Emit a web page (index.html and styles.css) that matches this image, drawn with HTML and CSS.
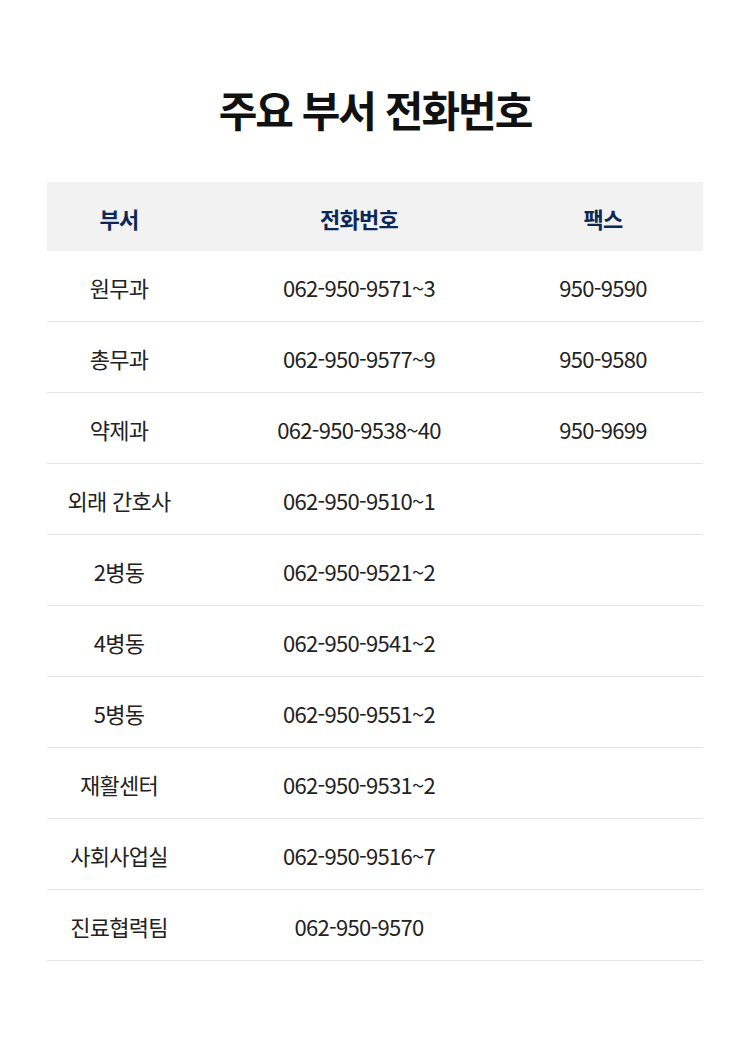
FILE: index.html
```html
<!DOCTYPE html>
<html lang="ko">
<head>
    <meta charset="UTF-8">
    <meta name="viewport" content="width=device-width, initial-scale=1.0">
    <title>주요 부서 전화번호</title>
    <link rel="stylesheet" href="styles.css">
</head>
<body>
    <div class="container">
        <h1>주요 부서 전화번호</h1>
        <div class="phone-table">
            <div class="row head">
                <div>부서</div>
                <div>전화번호</div>
                <div>팩스</div>
            </div>
            <div class="row"><div>원무과</div><div>062-950-9571~3</div><div>950-9590</div></div>
            <div class="row"><div>총무과</div><div>062-950-9577~9</div><div>950-9580</div></div>
            <div class="row"><div>약제과</div><div>062-950-9538~40</div><div>950-9699</div></div>
            <div class="row"><div>외래 간호사</div><div>062-950-9510~1</div><div></div></div>
            <div class="row"><div>2병동</div><div>062-950-9521~2</div><div></div></div>
            <div class="row"><div>4병동</div><div>062-950-9541~2</div><div></div></div>
            <div class="row"><div>5병동</div><div>062-950-9551~2</div><div></div></div>
            <div class="row"><div>재활센터</div><div>062-950-9531~2</div><div></div></div>
            <div class="row"><div>사회사업실</div><div>062-950-9516~7</div><div></div></div>
            <div class="row"><div>진료협력팀</div><div>062-950-9570</div><div></div></div>
        </div>
    </div>
</body>
</html>
```
FILE: styles.css
```css
/* basic page */
body {
    font-family: "Noto Sans CJK KR", "Noto Sans", sans-serif;
    margin: 0;
    padding: 0;
    background: #fff;
    color: #222;
}
.container {
    width: 656px;
    margin: 0 auto;
    padding: 78px 0 60px 0;
}
h1 {
    margin: 0 0 42px 0;
    text-align: center;
    font-size: 42px;
    font-weight: 700;
    letter-spacing: -2px;
    line-height: 62px;
    color: #111;
}
.row {
    display: grid;
    grid-template-columns: 144px 336px 152px;
    padding-right: 24px;
    height: 70px;
    align-items: center;
    text-align: center;
    font-size: 22px;
    letter-spacing: -0.7px;
    border-bottom: 1px solid #e3e3e8;
}
.row > div {
    padding-top: 1px;
}
.row.head {
    height: 69px;
    background: #f2f2f2;
    color: #0b2856;
    font-weight: 700;
    border-bottom: none;
}
.row.head > div {
    padding-top: 2px;
}
```
